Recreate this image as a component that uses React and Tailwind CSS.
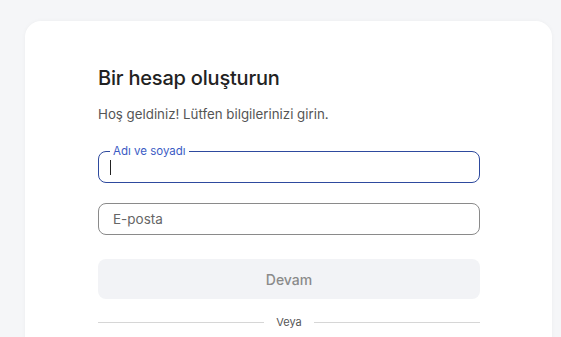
import React from "react";

export default function App() {
  const font = { fontFamily: "Inter, 'Noto Sans', sans-serif" };
  return (
    <div className="w-[561px] h-[337px] overflow-hidden bg-[#f5f6f8]" style={font}>
      <div className="ml-[25px] mt-[21px] w-[527px] h-[340px] bg-white rounded-[16px] shadow-[0_0_4px_rgba(0,0,0,0.04)] pl-[73px] pr-[72px] pt-[43px]">
        <h1 className="text-[20px] leading-[28px] font-medium text-[#222] tracking-[-0.2px]">Bir hesap oluşturun</h1>
        <p className="mt-[12px] text-[13.3px] leading-[20px] text-[#555]">Hoş geldiniz! Lütfen bilgilerinizi girin.</p>
        <div className="relative mt-[27px] h-[32px] border border-[#2e4a9e] rounded-[8px] flex items-center pl-[11px]">
          <span className="absolute left-[11px] top-[-8px] bg-white px-[3px] text-[11.5px] leading-[14px] text-[#3b5bc4]">Adı ve soyadı</span>
          <span className="w-[1px] h-[15px] bg-[#222]"></span>
        </div>
        <div className="mt-[20px] h-[32px] border border-[#8a8a8a] rounded-[8px] flex items-center pl-[14px] text-[13.5px] text-[#666]">E-posta</div>
        <button className="mt-[24px] w-full h-[40px] rounded-[8px] bg-[#f2f3f6] text-[14px] font-medium text-[#8a8a8a]">Devam</button>
        <div className="mt-[16px] flex items-center gap-[12px]">
          <div className="flex-1 h-px bg-[#d6d6d6]"></div>
          <span className="text-[11px] leading-[14px] text-[#555]">Veya</span>
          <div className="flex-1 h-px bg-[#d6d6d6]"></div>
        </div>
      </div>
    </div>
  );
}
